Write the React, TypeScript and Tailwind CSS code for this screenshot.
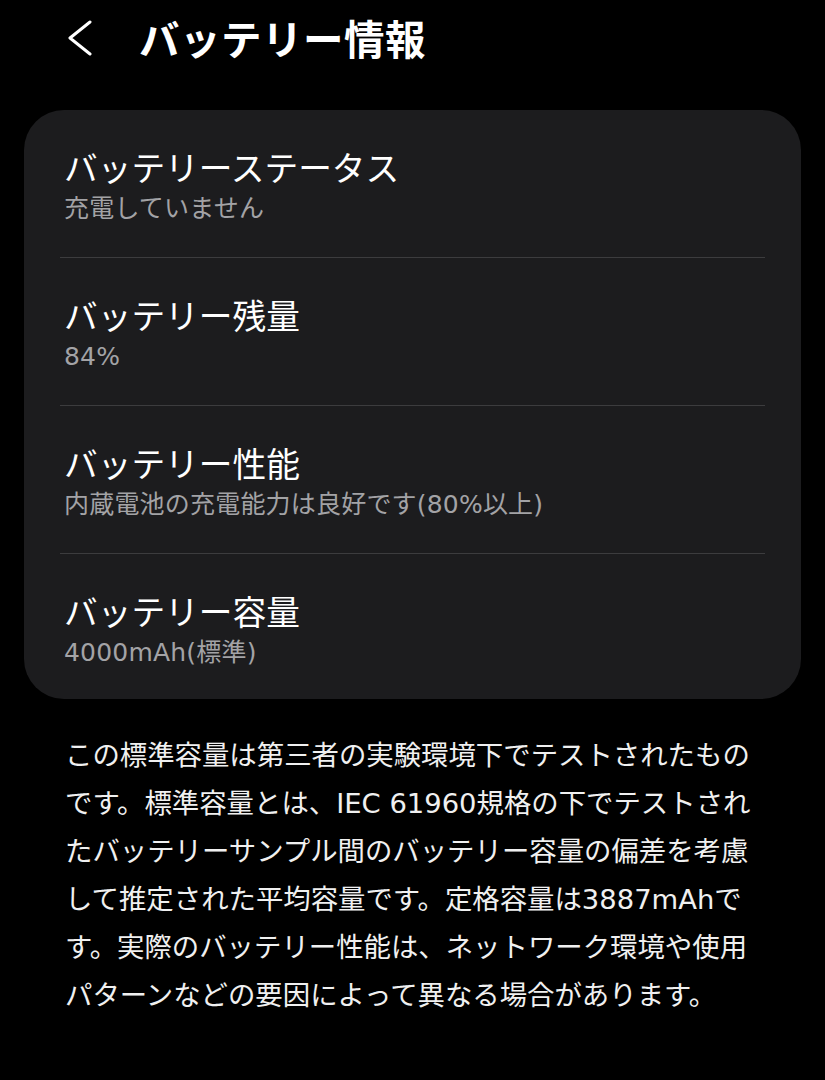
import React from "react";

const items = [
  { title: "バッテリーステータス", sub: "充電していません" },
  { title: "バッテリー残量", sub: "84%" },
  { title: "バッテリー性能", sub: "内蔵電池の充電能力は良好です(80%以上)" },
  { title: "バッテリー容量", sub: "4000mAh(標準)" },
];

const lines = [
  "この標準容量は第三者の実験環境下でテストされたもの",
  "です。標準容量とは、IEC 61960規格の下でテストされ",
  "たバッテリーサンプル間のバッテリー容量の偏差を考慮",
  "して推定された平均容量です。定格容量は3887mAhで",
  "す。実際のバッテリー性能は、ネットワーク環境や使用",
  "パターンなどの要因によって異なる場合があります。",
];

const latinFirst = { fontFamily: '"DejaVu Sans", "Noto Sans CJK JP", sans-serif' };

export default function App() {
  return (
    <div
      className="w-[825px] h-[1080px] bg-black text-white overflow-hidden"
      style={{ fontFamily: '"Noto Sans CJK JP", "Noto Sans", sans-serif' }}
    >
      <div className="flex items-center h-[40px] mt-[18px]">
        <div className="w-[139px] flex justify-start pl-[66px]">
          <svg width="28" height="36" viewBox="0 0 28 36" fill="none">
            <polyline points="24,2 4,18 24,34" stroke="white" strokeWidth="3" strokeLinecap="round" strokeLinejoin="round" />
          </svg>
        </div>
        <div className="text-[40.5px] leading-[40px] font-bold tracking-[0.5px]">バッテリー情報</div>
      </div>

      <div className="mx-[24px] mt-[52px] bg-[#1c1c1e] rounded-[40px] px-[36px]">
        {items.map((it, i) => (
          <div key={i} className={i > 0 ? "border-t border-[#3c3c3e]" : ""}>
            <div className={`pt-[37px] pl-[4px] ${i === items.length - 1 ? "pb-[30px]" : "pb-[32px]"}`}>
              <div className="text-[33.7px] leading-[40px] text-white whitespace-nowrap">{it.title}</div>
              <div className="mt-[6px] text-[25px] leading-[32px] tracking-[0.2px] text-[#a3a3a6] whitespace-nowrap" style={latinFirst}>{it.sub}</div>
            </div>
          </div>
        ))}
      </div>

      <div className="mt-[33px] pl-[65px] text-[27.4px] leading-[48px] text-[#f0f0f0]" style={latinFirst}>
        {lines.map((l, i) => (
          <div key={i} className="whitespace-nowrap">{l}</div>
        ))}
      </div>
    </div>
  );
}
